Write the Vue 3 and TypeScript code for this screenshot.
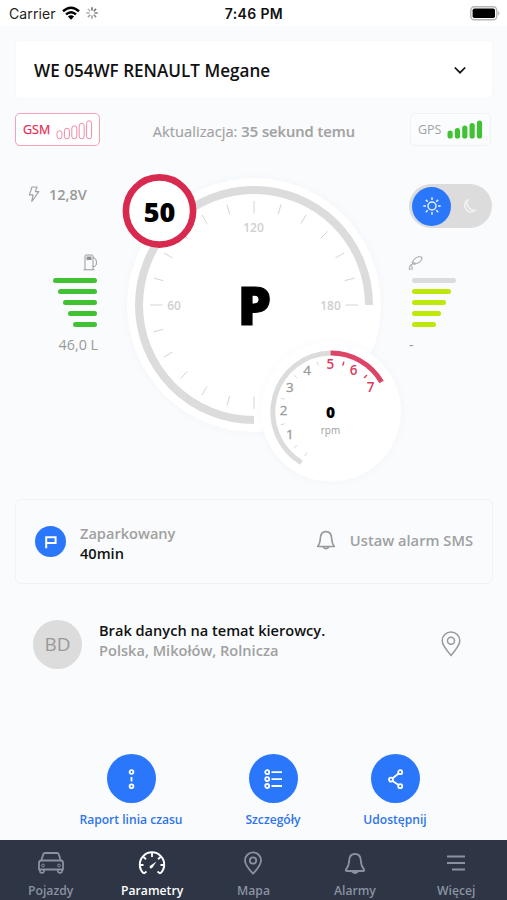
<script setup lang="ts">
interface Tick { x1: number; y1: number; x2: number; y2: number; red?: boolean }

function polar(cx: number, cy: number, r: number, deg: number): [number, number] {
  const a = (deg * Math.PI) / 180
  return [cx + r * Math.sin(a), cy - r * Math.cos(a)]
}
function tick(cx: number, cy: number, r1: number, r2: number, deg: number): Tick {
  const [x1, y1] = polar(cx, cy, r1, deg)
  const [x2, y2] = polar(cx, cy, r2, deg)
  return { x1, y1, x2, y2 }
}

const speedTicks: Tick[] = Array.from({ length: 19 }, (_, i) => {
  const major = i % 6 === 0
  return tick(134, 135, major ? 91.5 : 94, 104, 180 + i * 15)
})
const rpmTicks: Tick[] = [210, 225, 255, 285, 315, 345, 375, 405].map((d) => ({
  ...tick(210.5, 241.5, 47.5, 51.5, d),
  red: d > 360,
}))
const rpmNumbers = [1, 2, 3, 4, 5, 6, 7].map((n) => {
  const [x, y] = polar(210.3, 240, 46.6, 210 + n * 30)
  return { n, x, y: y + 5.2, red: n >= 5 }
})
const bars: number[] = [44, 39, 34, 29, 24]
const signal: number[] = [8, 10.5, 13, 15.5, 18]
const rays: number[] = [0, 45, 90, 135, 180, 225, 270, 315]
const spokes: number[] = [0, 45, 90, 135, 180, 225, 270, 315]
const tabs: { id: string; label: string }[] = [
  { id: 'car', label: 'Pojazdy' },
  { id: 'gauge', label: 'Parametry' },
  { id: 'pin', label: 'Mapa' },
  { id: 'bell', label: 'Alarmy' },
  { id: 'menu', label: 'Więcej' },
]
const actions: { id: string; label: string }[] = [
  { id: 'line', label: 'Raport linia czasu' },
  { id: 'list', label: 'Szczegóły' },
  { id: 'share', label: 'Udostępnij' },
]
</script>

<template>
  <div class="screen">
    <header class="status">
      <div class="carrier">
        <span>Carrier</span>
        <svg width="18" height="14" viewBox="0 0 18 14" fill="none" stroke="#000" stroke-width="2.5">
          <path d="M1 5.2Q9 -1.8 17 5.2" />
          <path d="M4 8.4Q9 4 14 8.4" />
          <path d="M5.9 10.6Q9 8 12.1 10.6L9 13.8Z" fill="#000" stroke="none" />
        </svg>
        <svg class="spinner" width="12" height="12" viewBox="-6 -6 12 12" stroke="#666" stroke-width="1.5">
          <line v-for="(s, i) in spokes" :key="s" y1="-2.4" y2="-5.8" :transform="`rotate(${s})`" :opacity="1 - i * 0.08" />
        </svg>
      </div>
      <span class="clock">7:46 PM</span>
      <svg class="battery" width="31" height="15" viewBox="0 0 31 15">
        <rect x="0.8" y="0.8" width="26" height="13" rx="3.6" fill="#fff" stroke="#b5b5b5" stroke-width="1.4" />
        <rect x="2.6" y="2.5" width="22.4" height="9.6" rx="1.8" />
        <path d="M28.2 4.8Q30.6 7.3 28.2 9.8Z" fill="#aaa" />
      </svg>
    </header>

    <div class="vehicle">
      <span>WE 054WF RENAULT Megane</span>
      <svg width="14" height="10" viewBox="0 0 14 10" fill="none" stroke="#111" stroke-width="1.7"><path d="M1.8 1.5L7 6.7L12.2 1.5" /></svg>
    </div>

    <div class="signals">
      <div class="badge gsm">
        <span>GSM</span>
        <svg width="37" height="20" viewBox="0 0 37 20" fill="#fff" stroke="#f28ba5" stroke-width="1">
          <rect v-for="(h, i) in signal" :key="i" :x="1 + i * 7.4" :y="18.8 - h" width="5" :height="h" rx="2.5" />
        </svg>
      </div>
      <p class="updated">Aktualizacja: <b>35 sekund temu</b></p>
      <div class="badge gps">
        <span>GPS</span>
        <svg width="37" height="20" viewBox="0 0 37 20" fill="#40c233">
          <rect v-for="(h, i) in signal" :key="i" :x="0.5 + i * 7.35" :y="18.5 - h" width="5.2" :height="h" rx="2.6" />
        </svg>
      </div>
    </div>

    <section class="dash">
      <div class="side left">
        <div class="volt">
          <svg width="12" height="17" viewBox="0 0 12 17" fill="none" stroke="#a2a2a2" stroke-width="1.2"><path d="M4 1H9L7.4 5.6H10.8L3.8 15.5L5 8.9H1.4Z" stroke-linejoin="round" /></svg>
          <span>12,8V</span>
        </div>
        <svg class="fuel" width="15" height="17" viewBox="0 0 15 17" fill="none" stroke="#999" stroke-width="1">
          <path d="M2 15.5V2.2Q2 1 3.2 1H8.8Q10 1 10 2.2V15.5M0.5 15.8H11.5M10 3L13 5.5Q13.8 8 13.2 11Q12 13 10 12.5" />
          <rect x="4" y="3" width="4" height="2.6" fill="#888" />
        </svg>
        <div class="bars">
          <i v-for="w in bars" :key="w" class="green" :style="{ width: w + 'px' }"></i>
        </div>
        <span class="value">46,0 L</span>
      </div>

      <svg class="gauges" width="285" height="315" viewBox="0 0 285 315">
        <circle class="plate" cx="134" cy="135" r="127" />
        <path d="M134 250A115 115 0 1 1 249 135" fill="none" stroke="#dcdcdc" stroke-width="8" />
        <g stroke="#d4d4d4" stroke-width="1">
          <line v-for="(t, i) in speedTicks" :key="i" :x1="t.x1" :y1="t.y1" :x2="t.x2" :y2="t.y2" />
        </g>
        <g class="scale">
          <text x="54" y="139.5">60</text>
          <text x="133.5" y="61.5">120</text>
          <text x="210.5" y="139.5">180</text>
        </g>
        <text class="gear" x="134.5" y="154.5">P</text>
        <circle cx="39.5" cy="41" r="33.6" fill="#fff" stroke="#d82a4e" stroke-width="6.6" />
        <text class="limit" x="39.5" y="51.5">50</text>
        <circle class="plate" cx="211" cy="241.5" r="70" />
        <path d="M181.5 292.6A59 59 0 0 1 210.5 183" fill="none" stroke="#dcdcdc" stroke-width="5" />
        <path d="M210.5 183A58.5 58.5 0 0 1 261.6 212" fill="none" stroke="#dc4566" stroke-width="5" />
        <line v-for="(t, i) in rpmTicks" :key="i" :x1="t.x1" :y1="t.y1" :x2="t.x2" :y2="t.y2" :stroke="t.red ? '#dc4566' : '#d8d8d8'" :stroke-width="t.red ? 1.5 : 1" />
        <text v-for="m in rpmNumbers" :key="m.n" class="rpm-n" :class="{ red: m.red }" :x="m.x" :y="m.y">{{ m.n }}</text>
        <text class="rpm" x="210.5" y="248">0</text>
        <text class="unit" x="210.5" y="264">rpm</text>
      </svg>

      <div class="side right">
        <div class="toggle">
          <div class="knob">
            <svg width="20" height="20" viewBox="-10 -10 20 20" fill="none" stroke="#e8f0ff" stroke-width="1.5">
              <circle r="4" />
              <line v-for="r in rays" :key="r" y1="-6" y2="-8.7" :transform="`rotate(${r})`" />
            </svg>
          </div>
          <svg width="16" height="16" viewBox="0 0 16 16" fill="none" stroke="#f5f5f5" stroke-width="1.3"><path d="M6 1.5A6.6 6.6 0 1 0 13.6 12.2A7.3 7.3 0 0 1 6 1.5Z" stroke-linejoin="round" /></svg>
        </div>
        <svg class="key" width="16" height="16" viewBox="0 0 16 16" fill="none" stroke="#aaa" stroke-width="1.1">
          <path d="M4.2 7.4Q6.5 2.6 10.6 1.8Q14.2 1.2 14 3.5Q13.5 6.6 8.6 8.6Q5.8 9.6 4.5 8.6ZM4.8 8.8Q1 10.5 1.3 14.2L4.2 14Q4.6 11.5 3.2 11M5.2 7.2L7.6 8.6" />
        </svg>
        <div class="bars">
          <i v-for="(w, i) in bars" :key="w" :class="i === 0 ? 'gray' : 'lime'" :style="{ width: w + 'px' }"></i>
        </div>
        <span class="value">-</span>
      </div>
    </section>

    <section class="parking">
      <div class="p-icon">
        <svg width="14" height="14" viewBox="0 0 14 14" fill="none" stroke="#fff" stroke-width="2"><path d="M2.2 13.2V2.3H11.6V8H2.2" /></svg>
      </div>
      <div class="lines">
        <span class="muted">Zaparkowany</span>
        <strong>40min</strong>
      </div>
      <div class="sms">
        <svg width="20" height="20" viewBox="0 0 20 20" fill="none" stroke="#999" stroke-width="1.6" stroke-linejoin="round"><path d="M1.6 16.5Q4.2 13.5 4.4 8Q4.8 1.6 10 1.6T15.6 8Q15.8 13.5 18.4 16.5ZM7 17Q10 20.3 13 17" /></svg>
        <span>Ustaw alarm SMS</span>
      </div>
    </section>

    <section class="driver">
      <div class="avatar">BD</div>
      <div class="lines">
        <strong>Brak danych na temat kierowcy.</strong>
        <span class="muted">Polska, Mikołów, Rolnicza</span>
      </div>
      <svg class="pin" width="20" height="26" viewBox="0 0 20 26" fill="none" stroke="#999" stroke-width="1.5"><path d="M10 24.4Q1.2 14.5 1.2 9.8A8.8 8.8 0 0 1 18.8 9.8Q18.8 14.5 10 24.4Z" /><circle cx="10" cy="9.8" r="3.5" /></svg>
    </section>

    <section class="actions">
      <div v-for="a in actions" :key="a.id" class="action">
        <div class="disc">
          <svg width="24" height="24" viewBox="0 0 24 24" fill="none" stroke="#fff" stroke-width="1.8">
            <template v-if="a.id === 'line'">
              <circle cx="12.5" cy="5" r="1.9" /><circle cx="12.5" cy="19.3" r="1.9" /><path d="M12.5 10V14.4" />
            </template>
            <template v-else-if="a.id === 'list'">
              <circle cx="6.2" cy="5.2" r="2" /><circle cx="6.2" cy="12.1" r="2" /><circle cx="6.2" cy="19" r="2" />
              <path d="M10.5 5.2H21M10.5 12.1H21M10.5 19H21" />
            </template>
            <template v-else>
              <circle cx="8" cy="12.6" r="2" /><circle cx="17.2" cy="5.2" r="2" /><circle cx="17.2" cy="19.2" r="2" />
              <path d="M9.6 11.3L15.6 6.5M9.6 13.9L15.6 17.9" />
            </template>
          </svg>
        </div>
        <span>{{ a.label }}</span>
      </div>
    </section>

    <nav class="tabs">
      <div v-for="t in tabs" :key="t.id" class="tab" :class="{ active: t.id === 'gauge' }">
        <svg width="28" height="24" viewBox="0 0 28 24" fill="none" stroke="currentColor" stroke-width="1.8" stroke-linejoin="round">
          <template v-if="t.id === 'car'">
            <path d="M4.2 9.5L6.3 3.2Q6.7 2 8 2H20Q21.3 2 21.7 3.2L23.8 9.5Q26 9.8 26 12V18.5H2V12Q2 9.8 4.2 9.5ZM4.2 9.5H23.8M3 18.5V20.6Q3 21.8 4.4 21.8H5.4Q6.6 21.8 7 20.5L7.5 18.5M25 18.5V20.6Q25 21.8 23.6 21.8H22.6Q21.4 21.8 21 20.5L20.5 18.5" />
            <circle cx="6" cy="14.5" r="1.4" stroke-width="1" /><circle cx="22" cy="14.5" r="1.4" stroke-width="1" />
          </template>
          <template v-else-if="t.id === 'gauge'">
            <path d="M5.8 22.6A12.2 12.2 0 1 1 22.2 22.6" stroke-width="2" />
            <path d="M14 2V6M2 14H5.5M26 14H22.5M5.5 6L8 8.2M22.5 6L20 8.2M5.8 22.6L8.5 20.5M22.2 22.6L19.5 20.5" />
            <path d="M12.2 14.7L18.5 10.5L14.3 16.8Q12.8 18 11.9 16.9T12.2 14.7Z" fill="currentColor" stroke="none" />
          </template>
          <template v-else-if="t.id === 'pin'">
            <path d="M14 22.7Q6 14 6 9.4A8 8 0 0 1 22 9.4Q22 14 14 22.7Z" /><circle cx="14" cy="9.5" r="3.2" />
          </template>
          <template v-else-if="t.id === 'bell'">
            <path d="M4.8 18.8Q8 15 8.2 9.5Q8.4 3 14 3T19.8 9.5Q20 15 23.2 18.8Q23.4 20 22.2 20H5.8Q4.6 20 4.8 18.8ZM11 20.5Q14 23.5 17 20.5" />
          </template>
          <template v-else>
            <path d="M5 5.5H23M5 12H23M10 18.5H23" stroke-width="2" />
          </template>
        </svg>
        <span>{{ t.label }}</span>
      </div>
    </nav>
  </div>
</template>

<style>
body { margin: 0; background: #f9fbfd; }
</style>

<style scoped>
.screen { width: 507px; height: 900px; display: flex; flex-direction: column; background: #f9fbfd; font-family: "Open Sans", sans-serif; color: #111; overflow: hidden; }
svg { display: block; flex: none; }
span, strong, p { white-space: nowrap; }
p { margin: 0; }
.status { flex: none; box-sizing: border-box; height: 26px; padding: 0 6px 0 9px; background: #fff; display: grid; grid-template-columns: 1fr auto 1fr; align-items: center; font-family: Inter, sans-serif; font-size: 14px; color: #222; }
.carrier { display: flex; align-items: center; gap: 6px; letter-spacing: 0.1px; }
.clock { font-weight: 600; letter-spacing: 0.35px; color: #111; margin-right: 2px; }
.battery { justify-self: end; }
.vehicle { flex: none; box-sizing: border-box; height: 57px; margin: 15px 15px 0 16px; padding: 2px 25px 0 18px; background: #fff; border-radius: 4px; display: flex; align-items: center; justify-content: space-between; font-size: 17.1px; font-weight: 600; box-shadow: 0 0 3px rgba(40, 60, 90, 0.04); }
.signals { flex: none; display: flex; justify-content: space-between; align-items: center; margin: 15px 16px 0 15px; height: 33px; }
.badge { box-sizing: border-box; height: 33px; display: flex; align-items: center; border-radius: 5px; font-size: 12.5px; }
.badge svg { margin-left: auto; }
.gsm { width: 85px; border: 1px solid #f5a0b4; color: #e62c55; padding: 0 6px 0 7px; background: #fff; -webkit-text-stroke: 0.25px #e62c55; }
.gps { width: 81px; border: 1px solid #f1f2f4; color: #a2a2a2; padding: 0 6px 0 7px; background: #fbfcfd; }
.updated { font-size: 14.7px; color: #a2a2a2; padding: 3px 2px 0 0; -webkit-text-stroke: 0.15px #a2a2a2; }
.updated b { font-weight: 600; }
.dash { flex: none; height: 315px; margin-top: 24px; display: grid; grid-template-columns: 120px 285px 102px; }
.side { display: flex; flex-direction: column; }
.left { align-items: flex-end; padding: 15px 22px 0 0; }
.volt { align-self: flex-start; display: flex; align-items: center; gap: 9px; margin-left: 28px; height: 18px; font-size: 14.5px; font-weight: 600; color: #999; }
.fuel { margin-top: 51px; }
.left .bars { align-items: flex-end; }
.bars { display: flex; flex-direction: column; gap: 6px; }
.left .bars { margin: 7px 1px 0 0; }
.bars i { height: 5px; border-radius: 3px; }
.green { background: #40c233; }
.gray { background: #dcdcdc; }
.lime { background: #bde80a; }
.value { font-size: 14.3px; color: #999; line-height: 18px; margin-top: 9px; }
.plate { fill: #fff; filter: drop-shadow(0 0 3px rgba(60, 70, 90, 0.04)); }
.gauges text { text-anchor: middle; }
.scale { font-size: 12px; font-weight: 600; fill: #d0d0d0; }
.gear { font-size: 53px; font-weight: 800; fill: #000; stroke: #000; stroke-width: 1px; }
.limit { font-size: 27px; font-weight: 800; fill: #000; }
.rpm-n { font-size: 13.5px; font-weight: 400; fill: #999; stroke: #999; stroke-width: 0.3px; }
.rpm-n.red { fill: #dc3c60; stroke: none; font-weight: 600; }
.rpm { font-size: 15.5px; font-weight: 800; fill: #000; }
.unit { font-size: 10px; fill: #a0a0a0; }
.right { align-items: flex-start; padding: 14px 0 0 4px; }
.toggle { box-sizing: border-box; width: 83px; height: 44px; border-radius: 22px; background: #dcdcdc; padding-left: 3px; display: flex; align-items: center; gap: 11px; }
.knob { width: 39px; height: 39px; border-radius: 50%; background: #2a77fb; display: flex; align-items: center; justify-content: center; }
.key { margin: 27px 0 0 -1px; }
.right .bars { margin: 7px 0 0 3px; }
.parking { flex: none; box-sizing: border-box; height: 85px; margin: 14px 14px 0 15px; border: 1px solid #f1f2f4; border-radius: 6px; display: flex; align-items: center; padding: 0 19px; }
.p-icon { width: 31px; height: 31px; border-radius: 50%; background: #2a77fb; display: flex; align-items: center; justify-content: center; }
.lines { display: flex; flex-direction: column; font-size: 14.6px; line-height: 20px; font-weight: 600; }
.parking .lines { margin: 2px 0 0 14px; }
.lines strong { font-weight: 600; color: #111; }
.muted { color: #a0a0a0; }
.sms { margin: -3px 0 0 auto; display: flex; align-items: center; gap: 14px; font-size: 14.7px; font-weight: 600; color: #a0a0a0; }
.driver { flex: none; height: 50px; margin: 35px 46px 0 33px; display: flex; align-items: center; }
.avatar { width: 49px; height: 49px; border-radius: 50%; background: #dcdcdc; color: #999; font-size: 19px; padding-bottom: 1px; box-sizing: border-box; display: flex; align-items: center; justify-content: center; }
.driver .lines { margin: -9px 0 0 17px; }
.driver .pin { margin-left: auto; }
.actions { flex: none; margin-top: 85px; display: grid; grid-template-columns: 104px 56px 66px; column-gap: 62px; padding-left: 79px; }
.action { display: flex; flex-direction: column; align-items: center; font-size: 12.1px; font-weight: 600; color: #2f74e8; line-height: 18px; }
.action:last-child { margin-left: -1px; margin-right: 1px; }
.disc { width: 49px; height: 49px; border-radius: 50%; background: #2a77fb; display: flex; align-items: center; justify-content: center; margin-bottom: 8px; }
.tabs { margin-top: auto; flex: none; height: 60px; background: #2e3545; display: grid; grid-template-columns: repeat(5, 1fr); }
.tab { display: flex; flex-direction: column; align-items: center; padding-top: 11px; color: #8a92a0; font-size: 12.2px; font-weight: 600; line-height: 18px; gap: 7px; }
.active { color: #fff; }
</style>
